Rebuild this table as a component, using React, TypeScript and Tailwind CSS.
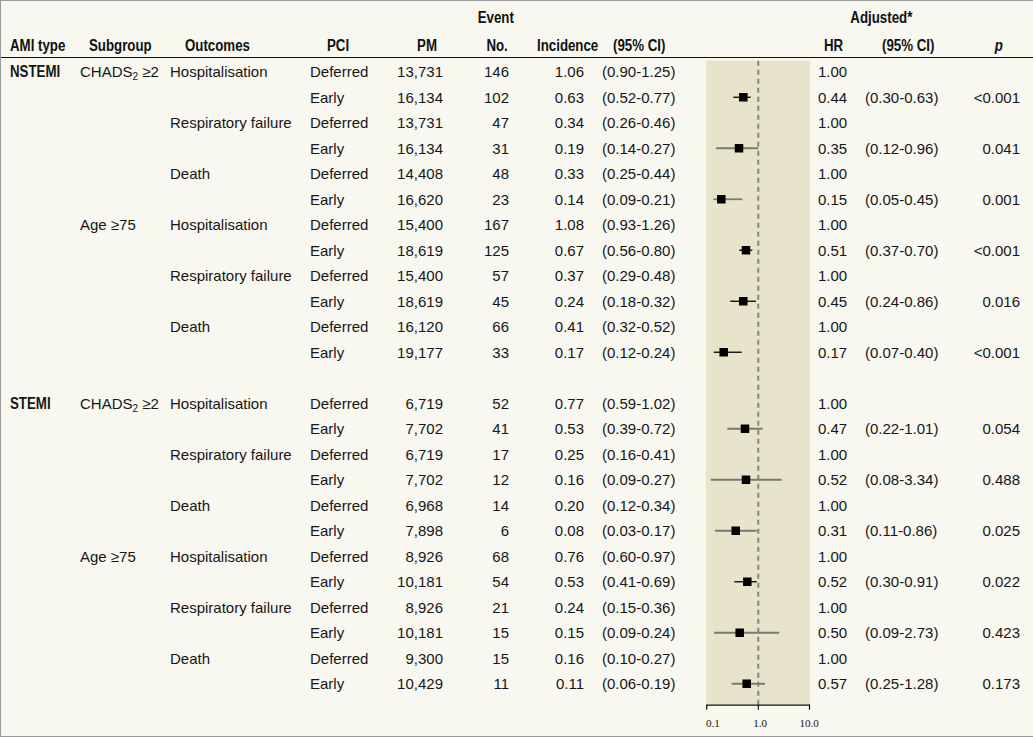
import React from "react";

type Row = {
  ami?: string;
  sub?: "chads" | "age";
  outcome?: string;
  pci: string;
  pm: string;
  no: string;
  inc: string;
  ci: string;
  hr: string;
  hrCi?: string;
  p?: string;
};

const NSTEMI: Row[] = [
  { ami: "NSTEMI", sub: "chads", outcome: "Hospitalisation", pci: "Deferred", pm: "13,731", no: "146", inc: "1.06", ci: "(0.90-1.25)", hr: "1.00" },
  { pci: "Early", pm: "16,134", no: "102", inc: "0.63", ci: "(0.52-0.77)", hr: "0.44", hrCi: "(0.30-0.63)", p: "<0.001" },
  { outcome: "Respiratory failure", pci: "Deferred", pm: "13,731", no: "47", inc: "0.34", ci: "(0.26-0.46)", hr: "1.00" },
  { pci: "Early", pm: "16,134", no: "31", inc: "0.19", ci: "(0.14-0.27)", hr: "0.35", hrCi: "(0.12-0.96)", p: "0.041" },
  { outcome: "Death", pci: "Deferred", pm: "14,408", no: "48", inc: "0.33", ci: "(0.25-0.44)", hr: "1.00" },
  { pci: "Early", pm: "16,620", no: "23", inc: "0.14", ci: "(0.09-0.21)", hr: "0.15", hrCi: "(0.05-0.45)", p: "0.001" },
  { sub: "age", outcome: "Hospitalisation", pci: "Deferred", pm: "15,400", no: "167", inc: "1.08", ci: "(0.93-1.26)", hr: "1.00" },
  { pci: "Early", pm: "18,619", no: "125", inc: "0.67", ci: "(0.56-0.80)", hr: "0.51", hrCi: "(0.37-0.70)", p: "<0.001" },
  { outcome: "Respiratory failure", pci: "Deferred", pm: "15,400", no: "57", inc: "0.37", ci: "(0.29-0.48)", hr: "1.00" },
  { pci: "Early", pm: "18,619", no: "45", inc: "0.24", ci: "(0.18-0.32)", hr: "0.45", hrCi: "(0.24-0.86)", p: "0.016" },
  { outcome: "Death", pci: "Deferred", pm: "16,120", no: "66", inc: "0.41", ci: "(0.32-0.52)", hr: "1.00" },
  { pci: "Early", pm: "19,177", no: "33", inc: "0.17", ci: "(0.12-0.24)", hr: "0.17", hrCi: "(0.07-0.40)", p: "<0.001" },
];

const STEMI: Row[] = [
  { ami: "STEMI", sub: "chads", outcome: "Hospitalisation", pci: "Deferred", pm: "6,719", no: "52", inc: "0.77", ci: "(0.59-1.02)", hr: "1.00" },
  { pci: "Early", pm: "7,702", no: "41", inc: "0.53", ci: "(0.39-0.72)", hr: "0.47", hrCi: "(0.22-1.01)", p: "0.054" },
  { outcome: "Respiratory failure", pci: "Deferred", pm: "6,719", no: "17", inc: "0.25", ci: "(0.16-0.41)", hr: "1.00" },
  { pci: "Early", pm: "7,702", no: "12", inc: "0.16", ci: "(0.09-0.27)", hr: "0.52", hrCi: "(0.08-3.34)", p: "0.488" },
  { outcome: "Death", pci: "Deferred", pm: "6,968", no: "14", inc: "0.20", ci: "(0.12-0.34)", hr: "1.00" },
  { pci: "Early", pm: "7,898", no: "6", inc: "0.08", ci: "(0.03-0.17)", hr: "0.31", hrCi: "(0.11-0.86)", p: "0.025" },
  { sub: "age", outcome: "Hospitalisation", pci: "Deferred", pm: "8,926", no: "68", inc: "0.76", ci: "(0.60-0.97)", hr: "1.00" },
  { pci: "Early", pm: "10,181", no: "54", inc: "0.53", ci: "(0.41-0.69)", hr: "0.52", hrCi: "(0.30-0.91)", p: "0.022" },
  { outcome: "Respiratory failure", pci: "Deferred", pm: "8,926", no: "21", inc: "0.24", ci: "(0.15-0.36)", hr: "1.00" },
  { pci: "Early", pm: "10,181", no: "15", inc: "0.15", ci: "(0.09-0.24)", hr: "0.50", hrCi: "(0.09-2.73)", p: "0.423" },
  { outcome: "Death", pci: "Deferred", pm: "9,300", no: "15", inc: "0.16", ci: "(0.10-0.27)", hr: "1.00" },
  { pci: "Early", pm: "10,429", no: "11", inc: "0.11", ci: "(0.06-0.19)", hr: "0.57", hrCi: "(0.25-1.28)", p: "0.173" },
];

// null = spacer row between NSTEMI and STEMI
const ROWS: (Row | null)[] = [...NSTEMI, null, ...STEMI];

// marker positions in px within plot column (0 = x 706), read off the figure
const MARKERS: { row: number; sq: number; lo: number; hi: number; dark?: boolean }[] = [
  { row: 1, sq: 37.3, lo: 27.3, hi: 44.7, dark: true },
  { row: 3, sq: 33, lo: 10, hi: 52.3 },
  { row: 5, sq: 15.3, lo: 7.3, hi: 36.3 },
  { row: 7, sq: 40, lo: 33.3, hi: 46.3, dark: true },
  { row: 9, sq: 37.3, lo: 24.3, hi: 50, dark: true },
  { row: 11, sq: 17.7, lo: 7.7, hi: 35.7, dark: true },
  { row: 14, sq: 39, lo: 21.3, hi: 56.7 },
  { row: 16, sq: 40, lo: 4.7, hi: 75.7 },
  { row: 18, sq: 29.7, lo: 9, hi: 50.7 },
  { row: 20, sq: 41.3, lo: 28.3, hi: 50.7, dark: true },
  { row: 22, sq: 33.7, lo: 8, hi: 73.3 },
  { row: 24, sq: 40.7, lo: 25.7, hi: 59 },
];

const ROW_H = 25.5;

// condensed bold heading text (no narrow face installed, so squeeze Liberation Sans Bold)
function H({ children, align = "left" }: { children: React.ReactNode; align?: "left" | "right" | "center" }) {
  const origin = align === "right" ? "origin-right" : align === "center" ? "origin-center" : "origin-left";
  return (
    <span className={`inline-block whitespace-nowrap scale-x-[0.83] ${origin} font-bold text-[16px]`}>
      {children}
    </span>
  );
}

function Chads() {
  return (
    <span>
      CHADS<sub className="text-[10px] relative top-[3px]">2</sub> ≥2
    </span>
  );
}

function ForestPlot() {
  const top = 1.7;
  const bottom = 645.7;
  return (
    <svg width="104" height="672" className="overflow-visible block" aria-hidden="true">
      <rect x="0" y={top} width="104" height={bottom - top} fill="#e8e4cb" />
      <line x1="52.3" y1={top} x2="52.3" y2={bottom} stroke="#858585" strokeWidth="2" strokeDasharray="5 4" />
      {MARKERS.map((m) => {
        const cy = m.row * ROW_H + ROW_H / 2;
        return (
          <g key={m.row}>
            <line x1={m.lo} y1={cy} x2={m.hi} y2={cy} stroke={m.dark ? "#111" : "#7a7a72"} strokeWidth={m.dark ? 1.4 : 1.8} />
            <rect x={m.sq - 4.25} y={cy - 4.25} width="8.5" height="8.5" fill="#000" />
          </g>
        );
      })}
      <line x1="0.5" y1={bottom + 0.5} x2="104" y2={bottom + 0.5} stroke="#111" strokeWidth="1.3" />
      <line x1="0.7" y1={bottom} x2="0.7" y2={bottom + 5} stroke="#111" strokeWidth="1.2" />
      <line x1="52.3" y1={bottom} x2="52.3" y2={bottom + 5} stroke="#111" strokeWidth="1.2" />
      <line x1="103.5" y1={bottom} x2="103.5" y2={bottom + 5} stroke="#111" strokeWidth="1.2" />
      <g fontFamily="'Liberation Serif', serif" fontSize="11" fill="#111">
        <text x="0" y={bottom + 22}>0.1</text>
        <text x="54" y={bottom + 22} textAnchor="middle">1.0</text>
        <text x="103" y={bottom + 22} textAnchor="middle">10.0</text>
      </g>
    </svg>
  );
}

export default function App() {
  return (
    <div className="w-[1033px] h-[737px] bg-[#f8f7f0] border-y border-l border-[#9b9b9b] overflow-hidden text-[#161616] font-['Liberation_Sans',Arial,sans-serif]">
      {/* Header */}
      <div className="pt-[7px] pb-[1px] border-b border-[#111] leading-[20px] text-[#111]">
        <div className="flex mb-[8px]">
          <div className="w-[380px]" />
          <div className="w-[230px] text-center"><H align="center">Event</H></div>
          <div className="w-[190px]" />
          <div className="w-[160px] text-center"><H align="center">Adjusted*</H></div>
        </div>
        <div className="flex">
          <div className="w-[77px] pl-[9px]"><H>AMI type</H></div>
          <div className="w-[92px] pl-[11px]"><H>Subgroup</H></div>
          <div className="w-[140px] pl-[15px]"><H>Outcomes</H></div>
          <div className="w-[70px] pl-[17px]"><H>PCI</H></div>
          <div className="w-[63px] text-right pr-[6px]"><H align="right">PM</H></div>
          <div className="w-[66px] text-right pr-[1px]"><H align="right">No.</H></div>
          <div className="w-[91px] pl-[28px]"><H>Incidence</H></div>
          <div className="w-[210px] pl-[13px]"><H>(95% CI)</H></div>
          <div className="w-[55px] pl-[14px]"><H>HR</H></div>
          <div className="w-[95px] pl-[17px]"><H>(95% CI)</H></div>
          <div className="w-[60px] text-right pr-[17px]"><H align="right"><i>p</i></H></div>
        </div>
      </div>

      {/* Body */}
      <div className="flex pt-[1px] text-[15px] leading-[25.5px]">
        <div className="w-[705px]">
          {ROWS.map((r, i) => (
            <div key={i} className="flex h-[25.5px]">
              {r && (
                <>
                  <div className="w-[77px] pl-[9px]">{r.ami && <H>{r.ami}</H>}</div>
                  <div className="w-[92px] pl-[2px] whitespace-nowrap">
                    {r.sub === "chads" ? <Chads /> : r.sub === "age" ? "Age ≥75" : null}
                  </div>
                  <div className="w-[140px] whitespace-nowrap">{r.outcome}</div>
                  <div className="w-[70px]">{r.pci}</div>
                  <div className="w-[63px] text-right">{r.pm}</div>
                  <div className="w-[66px] text-right">{r.no}</div>
                  <div className="w-[75px] text-right">{r.inc}</div>
                  <div className="w-[122px] pl-[18px] whitespace-nowrap">{r.ci}</div>
                </>
              )}
            </div>
          ))}
        </div>

        <ForestPlot />

        <div className="w-[210px]">
          {ROWS.map((r, i) => (
            <div key={i} className="flex h-[25.5px]">
              {r && (
                <>
                  <div className="w-[55px] pl-[8px]">{r.hr}</div>
                  <div className="w-[95px] whitespace-nowrap">{r.hrCi}</div>
                  <div className="w-[60px] text-right">{r.p}</div>
                </>
              )}
            </div>
          ))}
        </div>
      </div>
    </div>
  );
}
